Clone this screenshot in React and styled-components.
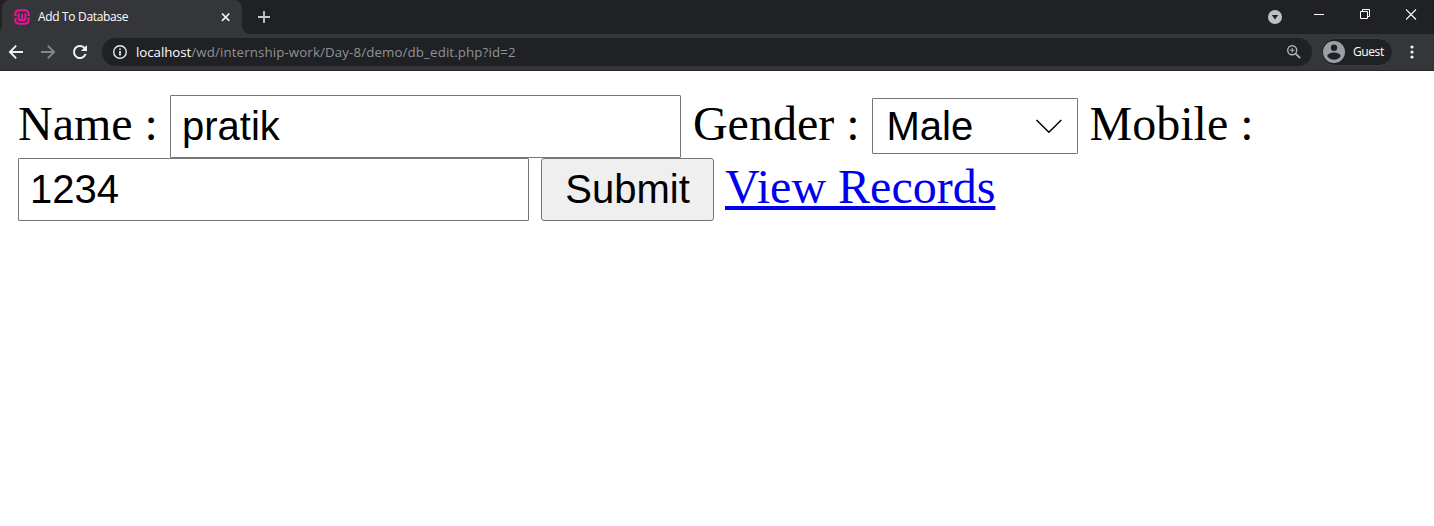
import React from "react";
import styled, { createGlobalStyle } from "styled-components";

const Global = createGlobalStyle`
  * { box-sizing: border-box; }
  body { margin: 0; background: #fff; overflow: hidden; }
`;
const Window = styled.div`
  width: 1434px; height: 526px; background: #fff;
  font-family: "Open Sans", "Noto Sans", sans-serif;
`;
const TabStrip = styled.div`
  display: flex; height: 34px; padding-left: 2px; background: #202124;
`;
const Tab = styled.div`
  position: relative; display: flex; align-items: center;
  width: 240px; height: 34px; padding: 0 11px 0 12px;
  background: #35363a; border-radius: 8px 8px 0 0; color: #fff;
  &::before, &::after {
    content: ""; position: absolute; bottom: 0; width: 8px; height: 8px;
  }
  &::before { left: -8px; background: radial-gradient(circle at 0 0, #202124 7.5px, #35363a 8px); }
  &::after { right: -8px; background: radial-gradient(circle at 100% 0, #202124 7.5px, #35363a 8px); }
`;
const TabTitle = styled.span`
  flex: 1; margin-left: 8px; white-space: nowrap;
  font-size: 12px; line-height: 34px;
`;
const TitleText = styled.span`letter-spacing: ${(p) => p.$track || "0"};`;
const Icon = styled.svg`display: block; flex: none;`;
const NewTab = styled.div`padding: 11px 0 0 16px;`;
const WindowControls = styled.div`
  display: flex; align-items: flex-start; margin-left: auto; padding: 8px 17px 0 0;
`;
const Control = styled.div`
  width: ${(p) => p.$w}px; padding-top: ${(p) => p.$top || 0}px;
`;
const Toolbar = styled.div`
  display: flex; align-items: center; height: 37px; padding: 0 14px 1px 8px;
  background: #35363a; border-bottom: 1px solid #26272b;
`;
const Navigation = styled.div`display: flex; gap: 16px; width: 94px;`;
const AddressBar = styled.div`
  display: flex; align-items: center; width: 1210px; height: 28px;
  padding: 0 10px; border-radius: 14px; background: #202124;
`;
const Address = styled.div`
  flex: 1; margin-left: 8px; color: #8f9296; font-size: 13.3px; line-height: 28px;
  white-space: nowrap; letter-spacing: 0.12px;
`;
const Host = styled.span`color: #fff; letter-spacing: -0.05px;`;
const Profile = styled.div`
  display: flex; align-items: center; gap: 8px; width: 72px; height: 28px;
  margin-left: 9px; padding-left: 1px; border: 1px solid #3c3d41; border-radius: 14px;
  background: #202124; color: #fff; font-size: 12px;
`;
const Menu = styled.div`margin-left: auto; padding-right: 6px;`;

const Form = styled.form`
  display: flex; flex-direction: column; padding: 24px 18px 0;
  font-family: "Liberation Serif", "Times New Roman", serif; font-size: 48px;
`;
const FormRow = styled.div`
  display: flex; align-items: baseline; height: 63px; white-space: pre;
`;
const Label = styled.label`line-height: 55px;`;
const TextInput = styled.input`
  width: 511px; height: 63px; margin: 0 12px 0 0; padding: 3px 11px;
  border: 1px solid #767676; border-radius: 1px; outline: none; background: #fff; color: #000;
  font: 40px "Liberation Sans", Arial, sans-serif;
`;
const SelectBox = styled.div`
  display: flex; align-items: baseline; justify-content: space-between;
  width: 206px; height: 56px; margin-right: 12px; padding: 0 15px 0 14px;
  border: 1px solid #767676; border-radius: 1px;
  font: 40px/54px "Liberation Sans", Arial, sans-serif;
`;
const Chevron = styled(Icon)`align-self: center;`;
const Submit = styled.button`
  width: 173px; height: 63px; margin: 0 11px 0 0; padding: 0;
  border: 1px solid #767676; border-radius: 3px; background: #efefef; color: #000;
  font: 40px "Liberation Sans", Arial, sans-serif;
`;
const RecordsLink = styled.a`
  color: #0000ee; line-height: 55px; text-decoration: underline;
  text-decoration-thickness: 4px; text-underline-offset: 3px; text-decoration-skip-ink: none;
`;

export default function App() {
  return (
    <Window>
      <Global />
      <TabStrip>
        <Tab>
          <Icon width="16" height="16" viewBox="0 0 16 16" fill="none" stroke="#f0109a">
            <path d="M1.2 6.4V5.5q0-4.3 4.3-4.3h5q4.3 0 4.3 4.3v.9M1.2 9.6v.9q0 4.3 4.3 4.3h5q4.3 0 4.3-4.3v-.9" strokeWidth="2" />
            <path d="M0 6.5h3M13 6.5h3M0 9.3h3M13 9.3h3" strokeWidth="1" />
            <path d="M4.6 4.2v5q0 2 1.7 2T8 9.6V5M8 9.6q0 1.6 1.7 1.6t1.7-2v-5" strokeWidth="1.9" />
          </Icon>
          <TabTitle><TitleText $track="-0.33px">Add To Database</TitleText></TabTitle>
          <Icon width="11" height="11" viewBox="0 0 11 11" stroke="#f1f3f4" strokeWidth="1.7">
            <path d="M2 1.5l7.3 7.3M9.3 1.5L2 8.8" />
          </Icon>
        </Tab>
        <NewTab>
          <Icon width="12" height="12" viewBox="0 0 12 12" stroke="#c5c7ca" strokeWidth="1.8">
            <path d="M6 0v12M0 6h12" />
          </Icon>
        </NewTab>
        <WindowControls>
          <Control $w={46} $top={2}>
            <Icon width="14" height="14" viewBox="0 0 14 14">
              <circle cx="7" cy="7" r="7" fill="#bdc1c6" />
              <path d="M3.8 5h6.4L7 9.5z" fill="#202124" />
            </Icon>
          </Control>
          <Control $w={46} $top={6}>
            <Icon width="10" height="1" viewBox="0 0 10 1"><path d="M0 0h10v1H0z" fill="#fff" /></Icon>
          </Control>
          <Control $w={46} $top={1}>
            <Icon width="10" height="10" viewBox="0 0 10 10" fill="none" stroke="#fff">
              <path d="M.5 2.5h7v7h-7zM2.5 2.5v-2h7v7h-2" />
            </Icon>
          </Control>
          <Control $w={11} $top={1}>
            <Icon width="11" height="11" viewBox="0 0 11 11" stroke="#fff" strokeWidth="1.1">
              <path d="M0 .5l10 10M10 .5l-10 10" />
            </Icon>
          </Control>
        </WindowControls>
      </TabStrip>
      <Toolbar>
        <Navigation>
          <Icon width="16" height="16" viewBox="0 0 16 16" fill="none" stroke="#f1f3f4" strokeWidth="1.9">
            <path d="M15 8H2.2M8.2 1.7L1.9 8l6.3 6.3" />
          </Icon>
          <Icon width="16" height="16" viewBox="0 0 16 16" fill="none" stroke="#85878a" strokeWidth="1.9">
            <path d="M1 8h12.8M7.8 1.7L14.1 8l-6.3 6.3" />
          </Icon>
          <Icon width="16" height="16" viewBox="0 0 16 16">
            <path d="M13.6 10A6 6 0 1 1 12.2 3.8L13.5 5.1" fill="none" stroke="#f1f3f4" strokeWidth="2" />
            <path d="M15 1v6H9z" fill="#f1f3f4" />
          </Icon>
        </Navigation>
        <AddressBar>
          <Icon width="16" height="16" viewBox="0 0 16 16" fill="none" stroke="#e8eaed">
            <circle cx="8" cy="8" r="6.3" strokeWidth="1.4" />
            <path d="M8 7v4.4M8 4.4v1.7" strokeWidth="1.7" />
          </Icon>
          <Address><Host>localhost</Host>/wd/internship-work/Day-8/demo/db_edit.php?id=2</Address>
          <Icon width="16" height="16" viewBox="0 0 16 16" fill="none" stroke="#b0b2b5">
            <circle cx="6.2" cy="6.3" r="4.5" strokeWidth="1.4" />
            <path d="M9.6 9.7l4.5 4.5" strokeWidth="1.8" />
            <path d="M6.2 4v4.6M3.9 6.3h4.6" strokeWidth="1.1" />
          </Icon>
        </AddressBar>
        <Profile>
          <Icon width="22" height="22" viewBox="0 0 22 22">
            <circle cx="11" cy="11" r="11" fill="#9aa0a6" />
            <circle cx="11" cy="6.7" r="3.2" fill="#202124" />
            <path d="M4.3 15.2c0-2.5 4.4-3.7 6.7-3.7s6.7 1.2 6.7 3.7c-1.5 2.2-3.8 3.5-6.7 3.5s-5.2-1.3-6.7-3.5z" fill="#202124" />
          </Icon>
          <TitleText $track="-0.4px">Guest</TitleText>
        </Profile>
        <Menu>
          <Icon width="4" height="14" viewBox="0 0 4 14" fill="#f1f3f4">
            <circle cx="2" cy="2" r="1.6" /><circle cx="2" cy="7" r="1.6" /><circle cx="2" cy="12" r="1.6" />
          </Icon>
        </Menu>
      </Toolbar>
      <Form>
        <FormRow>
          <Label htmlFor="name">{"Name : "}</Label>
          <TextInput id="name" defaultValue="pratik" />
          <Label>{"Gender : "}</Label>
          <SelectBox>
            Male
            <Chevron width="27" height="16" viewBox="0 0 27 16" fill="none" stroke="#000" strokeWidth="1.5">
              <path d="M1.5 2L13.9 14.3 26.3 2" />
            </Chevron>
          </SelectBox>
          <Label htmlFor="mobile">Mobile :</Label>
        </FormRow>
        <FormRow>
          <TextInput id="mobile" defaultValue="1234" />
          <Submit type="button">Submit</Submit>
          <RecordsLink href="#">View Records</RecordsLink>
        </FormRow>
      </Form>
    </Window>
  );
}
